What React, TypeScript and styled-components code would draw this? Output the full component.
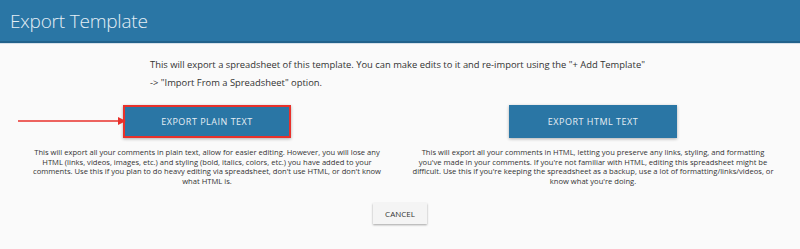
import React from 'react';
import styled, { createGlobalStyle } from 'styled-components';

const GlobalStyle = createGlobalStyle`
  html, body {
    margin: 0;
    padding: 0;
    background: #fafafa;
  }
  body {
    font-family: "Open Sans", "Liberation Sans", sans-serif;
    color: #333;
  }
`

const Modal = styled.div`
  width: 800px;
  height: 249px;
  background: #fafafa;
  display: flex;
  flex-direction: column;
`

const Header = styled.div`
  height: 41px;
  background: #2a76a5;
  border-bottom: 2px solid #22628b;
  box-shadow: 0 1px 0 #d6e1ea;
  display: flex;
  align-items: center;
  padding-left: 10px;
`

const Title = styled.h1`
  margin: 0;
  font-size: 19px;
  font-weight: 300;
  color: #e4eef5;
  letter-spacing: -0.2px;
`

const Body = styled.div`
  display: flex;
  flex-direction: column;
  align-items: center;
  padding-top: 13px;
`

const Intro = styled.p`
  margin: 0 0 0 150px;
  align-self: flex-start;
  width: 510px;
  font-size: 9.4px;
  line-height: 18px;
  color: #333;
`

const Columns = styled.div`
  display: grid;
  grid-template-columns: 1fr 1fr;
  width: 772px;
  margin-top: 13px;
`

const Column = styled.div`
  display: flex;
  flex-direction: column;
  align-items: center;
  position: relative;
`

const ExportButton = styled.button<{ $highlight?: boolean }>`
  width: 168px;
  height: 33px;
  background: #2a76a5;
  color: #e6eef4;
  font-family: inherit;
  font-size: 9px;
  letter-spacing: 0.5px;
  text-transform: uppercase;
  border: ${p => (p.$highlight ? '2px solid #e8312b' : '0')};
  box-shadow: 0 1px 3px rgba(0, 0, 0, 0.3);
  cursor: pointer;
`

const Arrow = styled.svg`
  position: absolute;
  left: 4px;
  top: 11px;
`

const Description = styled.p`
  margin: 10px 0 0;
  font-size: 7.6px;
  line-height: 9.5px;
  text-align: center;
  color: #333;
  width: 362px;
`

const CancelButton = styled.button`
  margin-top: 17px;
  width: 54px;
  height: 21px;
  background: #f4f4f4;
  border: 0;
  box-shadow: 0 1px 2px rgba(0, 0, 0, 0.35);
  font-family: inherit;
  font-size: 8px;
  color: #333;
  text-transform: uppercase;
  cursor: pointer;
`

export default function App() {
  return (
    <Modal>
      <GlobalStyle />
      <Header>
        <Title>Export Template</Title>
      </Header>
      <Body>
        <Intro>
          This will export a spreadsheet of this template. You can make edits to it and re-import using the "+ Add Template"
          <br />
          -&gt; "Import From a Spreadsheet" option.
        </Intro>
        <Columns>
          <Column>
            <Arrow width="108" height="10" viewBox="0 0 108 10">
              <line x1="0" y1="5" x2="100" y2="5" stroke="#e8312b" strokeWidth="1.5" />
              <polygon points="100,1 108,5 100,9" fill="#e8312b" />
            </Arrow>
            <ExportButton $highlight>Export Plain Text</ExportButton>
            <Description>
              This will export all your comments in plain text, allow for easier editing. However, you will lose any
              HTML (links, videos, images, etc.) and styling (bold, italics, colors, etc.) you have added to your
              comments. Use this if you plan to do heavy editing via spreadsheet, don't use HTML, or don't know
              what HTML is.
            </Description>
          </Column>
          <Column>
            <ExportButton>Export HTML Text</ExportButton>
            <Description>
              This will export all your comments in HTML, letting you preserve any links, styling, and formatting
              you've made in your comments. If you're not familiar with HTML, editing this spreadsheet might be
              difficult. Use this if you're keeping the spreadsheet as a backup, use a lot of formatting/links/videos, or
              know what you're doing.
            </Description>
          </Column>
        </Columns>
        <CancelButton>Cancel</CancelButton>
      </Body>
    </Modal>
  );
}
